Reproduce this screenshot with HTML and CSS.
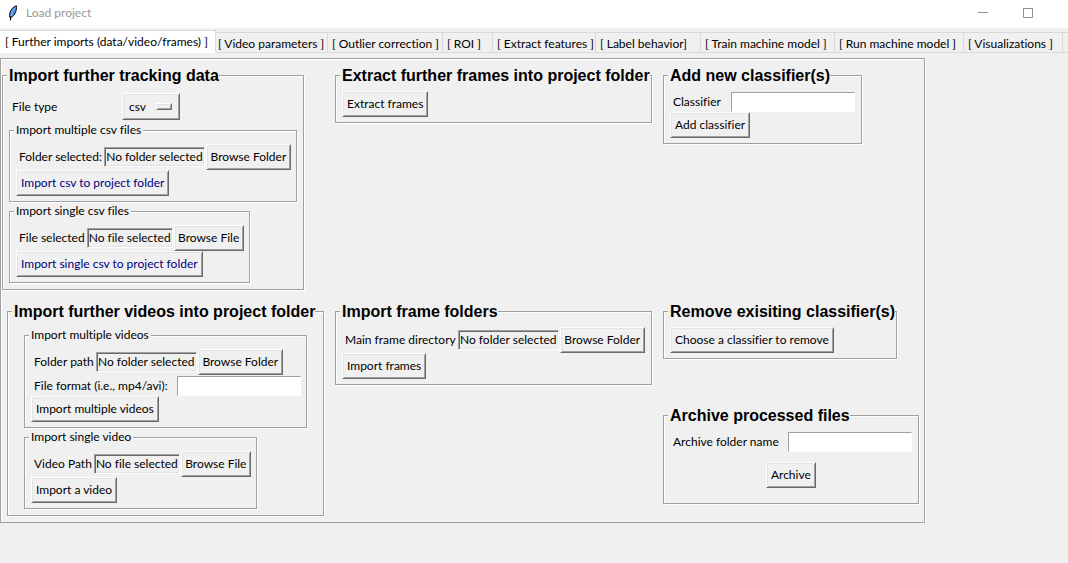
FILE: index.html
```html
<!DOCTYPE html>
<html lang="en">
<head>
<meta charset="utf-8">
<title>Load project</title>
<link rel="stylesheet" href="styles.css">
</head>
<body>
<header class="titlebar">
  <svg class="feather" viewBox="0 0 10 16" aria-hidden="true">
    <path d="M8.500 .8C5.500 1.500 2.500 4.500 1.800 8L1.600 12L3.400 12.600C6.500 10.500 9 6 8.500 .8Z" fill="#3f86d8" stroke="#101820" stroke-width="1"/>
    <path d="M7.300 2.800C5.300 5 3.600 8 3 11" fill="none" stroke="#9cc6f2" stroke-width="1"/>
    <path d="M2.500 11.500V15.500" fill="none" stroke="#000" stroke-width="1.100"/>
  </svg>
  <span class="title">Load project</span>
  <button class="win-btn" aria-label="Minimize"><svg viewBox="0 0 10 10"><path d="M0 4.500H10" stroke="#8f8f8f"/></svg></button>
  <button class="win-btn" aria-label="Maximize"><svg viewBox="0 0 10 10"><path d="M.5 .5H9.500V9.500H.5Z" fill="none" stroke="#8f8f8f"/></svg></button>
</header>

<nav class="tabs" role="tablist">
  <button class="tab active" role="tab" aria-selected="true">[ Further imports (data/video/frames) ]</button>
  <button class="tab" role="tab">[ Video parameters ]</button>
  <button class="tab" role="tab">[ Outlier correction ]</button>
  <button class="tab" role="tab">[ ROI ]</button>
  <button class="tab" role="tab">[ Extract features ]</button>
  <button class="tab" role="tab">[ Label behavior]</button>
  <button class="tab" role="tab">[ Train machine model ]</button>
  <button class="tab" role="tab">[ Run machine model ]</button>
  <button class="tab" role="tab">[ Visualizations ]</button>
  <span class="tab"></span>
</nav>

<main class="panel">
  <fieldset class="group tracking">
    <legend>Import further tracking data</legend>
    <div class="row file-type">
      <label class="caption" for="ftype">File type</label>
      <span class="menu">
        <select id="ftype"><option>csv</option><option>h5</option></select>
        <span class="menu-mark"></span>
      </span>
    </div>
    <fieldset class="sub">
      <legend>Import multiple csv files</legend>
      <div class="row"><span class="caption">Folder selected:</span><output class="path folder">No folder selected</output><button class="btn browse-folder">Browse Folder</button></div>
      <button class="btn navy">Import csv to project folder</button>
    </fieldset>
    <fieldset class="sub">
      <legend>Import single csv files</legend>
      <div class="row"><span class="caption">File selected</span><output class="path file">No file selected</output><button class="btn browse-file">Browse File</button></div>
      <button class="btn navy">Import single csv to project folder</button>
    </fieldset>
  </fieldset>

  <fieldset class="group extract">
    <legend>Extract further frames into project folder</legend>
    <button class="btn">Extract frames</button>
  </fieldset>

  <fieldset class="group classifier">
    <legend>Add new classifier(s)</legend>
    <div class="row"><label class="caption" for="cls">Classifier</label><input class="entry" id="cls" type="text"></div>
    <button class="btn">Add classifier</button>
  </fieldset>

  <fieldset class="group videos">
    <legend>Import further videos into project folder</legend>
    <fieldset class="sub">
      <legend>Import multiple videos</legend>
      <div class="row"><span class="caption">Folder path</span><output class="path folder">No folder selected</output><button class="btn browse-folder">Browse Folder</button></div>
      <div class="row"><label class="caption" for="fmt">File format (i.e., mp4/avi):</label><input class="entry" id="fmt" type="text"></div>
      <button class="btn">Import multiple videos</button>
    </fieldset>
    <fieldset class="sub">
      <legend>Import single video</legend>
      <div class="row"><span class="caption">Video Path</span><output class="path file">No file selected</output><button class="btn browse-file">Browse File</button></div>
      <button class="btn">Import a video</button>
    </fieldset>
  </fieldset>

  <fieldset class="group frames">
    <legend>Import frame folders</legend>
    <div class="row"><span class="caption">Main frame directory</span><output class="path folder">No folder selected</output><button class="btn browse-folder">Browse Folder</button></div>
    <button class="btn">Import frames</button>
  </fieldset>

  <div class="stack">
    <fieldset class="group remove">
      <legend>Remove exisiting classifier(s)</legend>
      <button class="btn">Choose a classifier to remove</button>
    </fieldset>
    <fieldset class="group archive">
      <legend>Archive processed files</legend>
      <div class="row"><label class="caption" for="arc">Archive folder name</label><input class="entry" id="arc" type="text"></div>
      <button class="btn centered">Archive</button>
    </fieldset>
  </div>
</main>
</body>
</html>
```
FILE: styles.css
```css
* { box-sizing: border-box; }

body {
  margin: 0;
  background: #f0f0f0;
  color: #000;
  font: 12px/16px Lato, "Open Sans", sans-serif;
  font-variant-ligatures: none;
  overflow-x: hidden;
}

button, input, select { font: inherit; font-variant-ligatures: none; color: inherit; margin: 0; border-radius: 0; }

/* title bar */
.titlebar {
  display: flex;
  align-items: center;
  height: 28px;
  padding: 0 18px 3px 8px;
  background: #fff;
}
.feather { width: 10px; height: 16px; }
.title { margin-left: 8px; margin-right: auto; color: #999; }
.win-btn {
  width: 45px;
  height: 24px;
  padding: 0;
  border: 0;
  background: none;
  display: flex;
  align-items: center;
  justify-content: center;
}
.win-btn svg { width: 10px; height: 10px; }

/* tabs */
.tabs {
  display: grid;
  grid-template-columns: 216px 112px 115px 50px 103px 105px 134px 129px 99px 112px;
  align-items: end;
  height: 25px;
  overflow: hidden;
}
.tab {
  height: 21px;
  padding: 2px 0 0 4px;
  border: 1px solid #d9d9d9;
  border-left: 0;
  background: #f0f0f0;
  text-align: left;
  white-space: nowrap;
}
.tab.active { height: 23px; padding: 1px 0 0 5px; background: #fff; border-bottom-color: #fff; }
.tab:nth-child(2) { padding-left: 2px; }

/* panel and groups */
.panel {
  display: grid;
  grid-template-columns: 333px 328px auto;
  row-gap: 12px;
  align-items: start;
  justify-items: start;
  width: fit-content;
  margin-top: 5px;
  padding: 7px 5px 6px 1px;
}
.panel, fieldset {
  border: 1px solid #a0a0a0;
  box-shadow: 1px 1px 0 #fff, inset 1px 1px 0 #fff;
}
fieldset { margin: 0; min-width: 0; }
legend { background: #f0f0f0; margin-left: -2px; padding: 0 2px; white-space: nowrap; }
.group { padding: 6px 6px 5px; }
.group > legend {
  margin-right: -5px;
  padding: 1px 0 0 2px;
  font: bold 16px/18px "Liberation Sans", Arial, sans-serif;
}
.sub { width: fit-content; padding: 6px 5px 5px 6px; margin-bottom: 1px; }
.sub > legend { line-height: 16px; }

.videos { margin-left: 5px; }
.videos .sub { margin-left: 10px; margin-right: 10px; }
.classifier { width: 199px; }
.stack { display: grid; gap: 47px; justify-items: start; }
.archive { padding-bottom: 15px; }

/* controls */
.row { display: flex; align-items: center; justify-content: space-between; }
.caption { padding: 0 2px 0 3px; white-space: nowrap; }
.file-type { justify-content: start; padding: 2px 0; }
.file-type .caption { width: 113px; }
.btn {
  display: block;
  height: 26px;
  padding: 0 4px;
  border: 1px solid;
  border-color: #fff #696969 #696969 #fff;
  box-shadow: inset 1px 1px 0 #e3e3e3, inset -1px -1px 0 #a0a0a0;
  background: #f0f0f0;
  white-space: nowrap;
}
.navy { color: #000080; }
.centered { margin: 10px auto 0; }
.browse-folder, .browse-file { padding: 0; }
.browse-folder { width: 85px; }
.browse-file { width: 70px; }
.path {
  height: 20px;
  margin-right: 1px;
  padding: 1px;
  border: 1px solid;
  border-color: #a0a0a0 #fff #fff #a0a0a0;
  box-shadow: inset 1px 1px 0 #696969, inset -1px -1px 0 #e3e3e3;
  text-align: center;
  white-space: nowrap;
}
.folder { width: 101px; }
.file { width: 86px; }
.entry {
  width: 124px;
  height: 20px;
  margin: 1px 0 0 7px;
  padding: 1px 2px;
  border: 1px solid;
  border-color: #a0a0a0 #fff #fff #a0a0a0;
  background: #fff;
}
.sub .row, .frames .row { justify-content: start; }
.menu {
  display: grid;
  align-items: center;
  width: 58px;
  height: 27px;
  border: 1px solid;
  border-color: #fff #696969 #696969 #fff;
  box-shadow: inset 1px 1px 0 #e3e3e3, inset -1px -1px 0 #a0a0a0;
}
.menu > * { grid-area: 1 / 1; }
.menu select {
  width: 100%;
  padding: 0 0 0 6px;
  border: 0;
  background: none;
  appearance: none;
}
.menu-mark {
  justify-self: end;
  width: 16px;
  height: 7px;
  margin-right: 7px;
  border: 1px solid;
  border-color: #fff #696969 #696969 #fff;
  box-shadow: inset 1px 1px 0 #e3e3e3, inset -1px -1px 0 #a0a0a0;
  pointer-events: none;
}
```
